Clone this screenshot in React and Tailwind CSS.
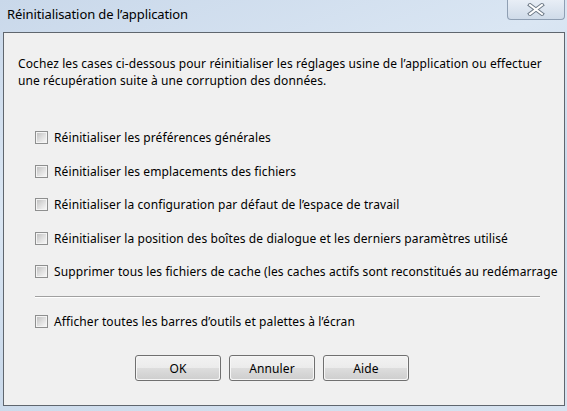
import React from "react";

const font = { fontFamily: '"Noto Sans", "Open Sans", sans-serif' };

function Checkbox() {
  return (
    <span className="inline-block w-[13px] h-[13px] border border-[#8e8f8f] bg-[#f4f4f4] shrink-0 p-[1px]">
      <span className="block w-full h-full bg-gradient-to-br from-[#c2c2c2] via-[#dedede] to-[#f6f6f6]" />
    </span>
  );
}

function Row({ children }) {
  return (
    <div className="flex items-center h-[33.5px] gap-[6px] whitespace-nowrap">
      <Checkbox />
      <span>{children}</span>
    </div>
  );
}

function Button({ children }) {
  return (
    <div className="w-[86px] h-[26px] rounded-[3px] border border-[#707070] p-[1px] bg-[#f6f6f6]">
      <div className="w-full h-full rounded-[2px] flex items-center justify-center bg-[linear-gradient(to_bottom,#f2f2f2_0%,#ebebeb_50%,#dddddd_51%,#cfcfcf_100%)]">
        {children}
      </div>
    </div>
  );
}

export default function App() {
  return (
    <div
      className="w-[567px] h-[411px] overflow-hidden flex flex-col bg-[linear-gradient(160deg,#c9d8ea_0%,#dae6f3_35%,#cbdaeb_60%,#d7e3f0_100%)] text-black"
      style={font}
    >
      <div className="h-[32px] flex items-start shrink-0 relative">
        <div className="pl-[7px] pt-[5px] text-[13px] tracking-[-0.1px] leading-[18px] text-black">
          Réinitialisation de l’application
        </div>
        <div className="absolute left-[507px] top-0 w-[58px] h-[20px] rounded-b-[4px] border border-t-0 border-[#8f9fb3] bg-[linear-gradient(to_bottom,#e8eef6,#cfdbe9)] flex items-center justify-center">
          <svg width="18" height="13" viewBox="0 0 18 13">
            <path d="M3 2 L15 11 M15 2 L3 11" stroke="#6f7b88" strokeWidth="4" strokeLinecap="square" />
            <path d="M3 2 L15 11 M15 2 L3 11" stroke="#ffffff" strokeWidth="2" strokeLinecap="square" />
          </svg>
        </div>
      </div>
      <div className="ml-[3px] mr-[2px] mb-[5px] flex-1 border border-[#5f666e] bg-[#f0f0f0] overflow-hidden flex flex-col text-[12px] leading-[17px] tracking-[0.1px]">
        <div className="pl-[14px] pr-[10px] pt-[22px]">
          <p className="whitespace-nowrap">
            Cochez les cases ci-dessous pour réinitialiser les réglages usine de l’application ou effectuer
            <br />
            une récupération suite à une corruption des données.
          </p>
        </div>
        <div className="pl-[31px] mt-[32px] flex flex-col">
          <Row>Réinitialiser les préférences générales</Row>
          <Row>Réinitialiser les emplacements des fichiers</Row>
          <Row>Réinitialiser la configuration par défaut de l’espace de travail</Row>
          <Row>Réinitialiser la position des boîtes de dialogue et les derniers paramètres utilisé</Row>
          <Row>Supprimer tous les fichiers de cache (les caches actifs sont reconstitués au redémarrage</Row>
          <div className="w-[505px] h-[1px] bg-[#a0a0a0] mt-[7px] border-b border-white box-content" />
          <div className="mt-[7px]">
            <Row>Afficher toutes les barres d’outils et palettes à l’écran</Row>
          </div>
        </div>
        <div className="flex gap-[8px] pl-[131px] mt-[17px]">
          <Button>OK</Button>
          <Button>Annuler</Button>
          <Button>Aide</Button>
        </div>
      </div>
    </div>
  );
}
